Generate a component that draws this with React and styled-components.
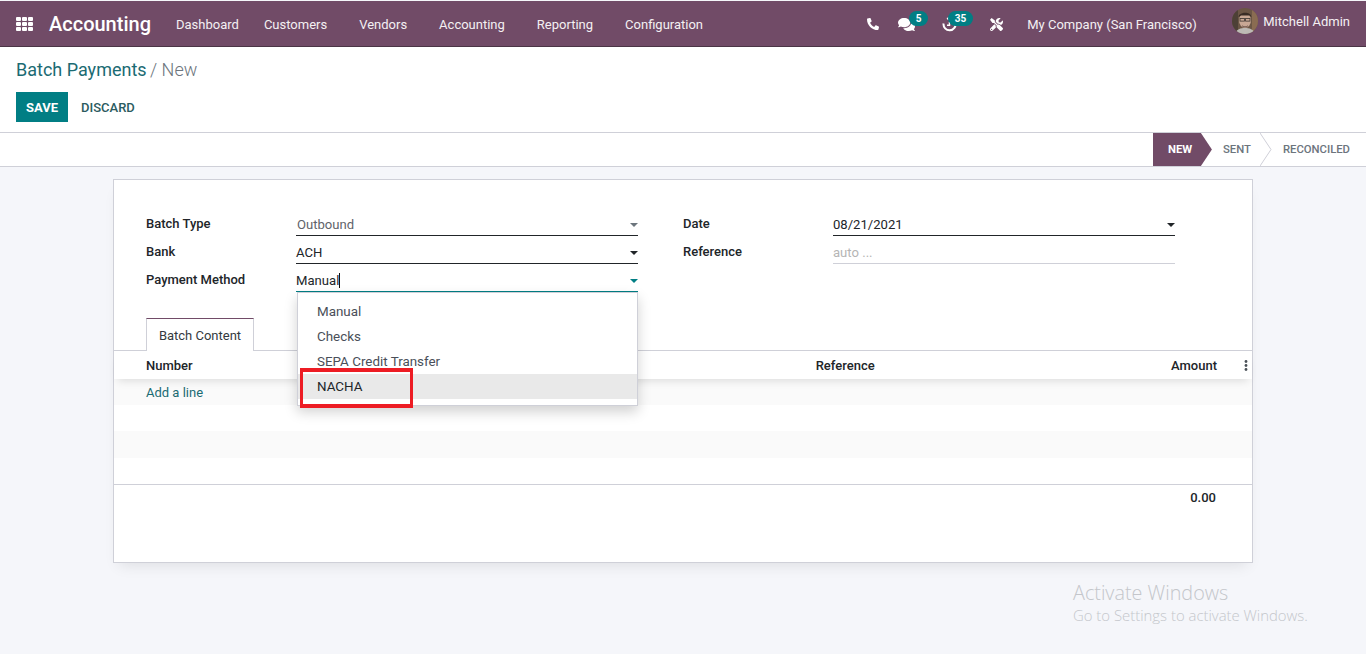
import React from "react";
import styled, { createGlobalStyle } from "styled-components";
import { FaPhone, FaComments, FaTools } from "react-icons/fa";

const Global = createGlobalStyle`
  * { box-sizing: border-box; }
  html, body { margin: 0; height: 100%; }
  body {
    background: #f5f6fa;
    font-family: Roboto, "Noto Sans", sans-serif;
    font-size: 13px;
    color: #212529;
  }
`;

const Page = styled.div`
  height: 654px;
  overflow: hidden;
  position: relative;
  display: flex;
  flex-direction: column;
`;

const Navbar = styled.header`
  height: 46px;
  flex: none;
  margin-top: 1px;
  background: #714b67;
  border-bottom: 1px solid #4b3546;
  display: flex;
  align-items: center;
  color: #fff;
  padding: 1px 16px 0;
`;

const Grid = styled.span`
  display: grid;
  grid-template-columns: repeat(3, 5px);
  grid-auto-rows: 4px;
  gap: 1px;
  width: 17px;
  span { background: #fff; border-radius: 1px; }
`;

const Brand = styled.span`
  font-size: 20px;
  font-weight: 500;
  margin-left: 16px;
  width: 127px;
`;

const MenuItem = styled.span`
  font-size: 13px;
  color: #f4f0f3;
  margin-right: ${(p) => p.$gap}px;
`;

const Right = styled.div`
  margin-left: auto;
  display: flex;
  align-items: center;
  height: 100%;
`;

const IconSlot = styled.span`
  position: relative;
  display: flex;
  align-items: center;
  height: 14px;
  width: ${(p) => p.$w}px;
  font-size: ${(p) => p.$size || 12}px;
`;

const Badge = styled.span`
  position: absolute;
  top: -6px;
  left: ${(p) => p.$left}px;
  height: 15px;
  padding: 0 6.5px;
  border-radius: 8px;
  background: #017e84;
  color: #fff;
  font-size: 10px;
  font-weight: 700;
  line-height: 15px;
`;

const Company = styled.span`
  font-size: 13px;
  color: #f4f0f3;
  width: 205px;
`;

const Avatar = styled.span`
  width: 26px;
  height: 26px;
  border-radius: 50%;
  overflow: hidden;
  margin-right: 5px;
  margin-top: -6px;
  svg { display: block; }
`;

const UserName = styled.span`
  font-size: 13px;
  color: #f4f0f3;
  margin-top: -6px;
`;

const ControlPanel = styled.section`
  height: 86px;
  flex: none;
  background: #fff;
  border-bottom: 1px solid #cfd0d8;
  padding: 11px 16px 0;
`;

const Breadcrumb = styled.div`
  font-size: 18px;
  line-height: 24px;
  color: #1b6b73;
  span { color: #6c757d; font-weight: 300; margin-left: -1px; }
`;

const Buttons = styled.div`
  display: flex;
  align-items: center;
  margin-top: 10px;
`;

const SaveButton = styled.span`
  width: 52px;
  height: 30px;
  background: #017e84;
  color: #fff;
  font-weight: 700;
  font-size: 13px;
  display: flex;
  align-items: center;
  justify-content: center;
`;

const DiscardButton = styled.span`
  margin-left: 13px;
  color: #2b5b60;
  font-weight: 500;
  font-size: 13px;
`;

const StatusBar = styled.div`
  height: 34px;
  flex: none;
  background: #fff;
  border-bottom: 1px solid #cfd0d8;
  display: flex;
  justify-content: flex-end;
`;

const StepActive = styled.span`
  width: 59px;
  background: #714b67;
  color: #fff;
  font-size: 11.3px;
  font-weight: 700;
  padding-left: 15px;
  line-height: 33px;
  clip-path: polygon(0 0, 48px 0, 100% 50%, 48px 100%, 0 100%);
`;

const Step = styled.span`
  font-size: 11.3px;
  font-weight: 500;
  color: #6c757d;
  line-height: 33px;
  padding-left: ${(p) => p.$pad}px;
  padding-right: ${(p) => p.$right}px;
  display: flex;
`;

const Chevron = styled.svg`
  width: 12px;
  height: 33px;
  flex: none;
`;

const Sheet = styled.main`
  position: relative;
  align-self: center;
  width: 1140px;
  height: 384px;
  margin-top: 12px;
  background: #fff;
  border: 1px solid #cfd0d8;
  box-shadow: 0 8px 14px -6px rgba(0, 0, 0, 0.1);
`;

const FormGrid = styled.div`
  display: grid;
  grid-template-columns: 492px 492px;
  column-gap: 45px;
  padding: 30px 32px 0;
  height: 138px;
`;

const FieldRow = styled.div`
  display: flex;
  height: 28px;
`;

const Label = styled.label`
  width: 150px;
  font-weight: 500;
  font-size: 13px;
  line-height: 28px;
  color: #212529;
`;

const Field = styled.div`
  position: relative;
  width: 342px;
  height: 26px;
  margin-bottom: 2px;
  border-bottom: 1px solid ${(p) => p.$line || "#212529"};
  font-size: 13.1px;
  line-height: 26px;
  color: ${(p) => p.$color || "#212529"};
  padding-top: 2px;
  padding-left: ${(p) => p.$pad || 0}px;
`;

const Caret = styled.i`
  position: absolute;
  right: 0;
  top: 13px;
  border-left: 4px solid transparent;
  border-right: 4px solid transparent;
  border-top: 4px solid ${(p) => p.$color || "#212529"};
`;

const Cursor = styled.b`
  display: inline-block;
  width: 1px;
  height: 15px;
  background: #111;
  vertical-align: -3px;
`;

const TabStrip = styled.div`
  height: 33px;
  padding-left: 32px;
  border-bottom: 1px solid #cfd0d8;
`;

const Tab = styled.span`
  display: inline-block;
  width: 108px;
  height: 33px;
  background: #fff;
  border: 1px solid #cfd0d8;
  border-top-color: #714b67;
  border-bottom: 0;
  text-align: center;
  line-height: 33px;
  font-size: 13px;
  color: #343a40;
`;

const TableHead = styled.div`
  height: 28px;
  display: flex;
  align-items: center;
  font-weight: 500;
  padding-left: 32px;
  box-shadow: 0 6px 8px -4px rgba(0, 0, 0, 0.12);
  position: relative;
`;

const RefHead = styled.span`
  margin-left: 623px;
`;

const AmountHead = styled.span`
  margin-left: auto;
  margin-right: 35px;
`;

const Dots = styled.svg`
  position: absolute;
  right: 4px;
  top: 9px;
  width: 4px;
  height: 11px;
`;

const Row = styled.div`
  height: ${(p) => p.$h}px;
  background: ${(p) => (p.$shade ? "#fafafa" : "#fff")};
  padding-left: 32px;
  line-height: 28px;
  color: #1b6b73;
  font-size: 13px;
`;

const TotalRow = styled.div`
  border-top: 1px solid #cfd0d8;
  margin-top: -1px;
  height: 40px;
  text-align: right;
  padding-right: 36px;
  padding-top: 5px;
  font-weight: 500;
  line-height: 16px;
`;

const Dropdown = styled.div`
  position: absolute;
  left: 183px;
  top: 112px;
  width: 341px;
  height: 114px;
  background: #fff;
  border: 1px solid #cfd0d8;
  box-shadow: 0 6px 12px rgba(0, 0, 0, 0.18);
  padding-top: 6px;
`;

const Option = styled.div`
  height: 25px;
  line-height: 25px;
  padding-left: 19px;
  font-size: 13.4px;
  color: ${(p) => (p.$active ? "#212529" : "#4a4f59")};
  background: ${(p) => (p.$active ? "#e9e9e9" : "transparent")};
`;

const Highlight = styled.div`
  position: absolute;
  left: 2px;
  top: 75px;
  width: 113px;
  height: 40px;
  border: solid #ed1c24;
  border-width: 4px 3px;
`;

const Watermark = styled.div`
  position: absolute;
  left: 1073px;
  top: 580px;
  color: #c4c6cb;
  font-family: "Open Sans", sans-serif;
  font-size: 14.9px;
  font-weight: 300;
  line-height: 20px;
`;

const WatermarkTitle = styled.div`
  font-size: 19.8px;
  line-height: 25px;
`;

function HistoryIcon() {
  return (
    <svg width="15" height="15" viewBox="0 0 15 15" fill="none">
      <path d="M5 1.9A6 6 0 1 1 1.6 6.5" stroke="#fff" strokeWidth="2" />
      <path d="M7.5 5v3.2H5" stroke="#fff" strokeWidth="1.5" />
    </svg>
  );
}

function Portrait() {
  return (
    <svg width="26" height="26" viewBox="0 0 26 26">
      <rect width="26" height="26" fill="#6b5645" />
      <rect width="6" height="26" fill="#4d4036" />
      <rect x="20" width="6" height="26" fill="#8a6c52" />
      <ellipse cx="13" cy="12.5" rx="6" ry="7.5" fill="#c8a895" />
      <path d="M6.5 9c0-5 12-6.5 13 0l-2-1.5H9z" fill="#382c25" />
      <rect x="8" y="10.5" width="4.4" height="2.6" fill="none" stroke="#3a3430" strokeWidth=".8" />
      <rect x="13.6" y="10.5" width="4.4" height="2.6" fill="none" stroke="#3a3430" strokeWidth=".8" />
      <path d="M10 17c1.5 1.6 4.5 1.6 6 0l-.5 2.5h-5z" fill="#80665a" />
      <path d="M3 26c1-5 6-6 10-6s9 1 10 6z" fill="#bdbab5" />
    </svg>
  );
}

const menu = [
  ["Dashboard", 25],
  ["Customers", 32],
  ["Vendors", 32],
  ["Accounting", 32],
  ["Reporting", 32],
  ["Configuration", 0],
];

export default function App() {
  return (
    <Page>
      <Global />
      <Navbar>
        <Grid>
          {Array.from({ length: 9 }).map((_, i) => (
            <span key={i} />
          ))}
        </Grid>
        <Brand>Accounting</Brand>
        {menu.map(([label, gap]) => (
          <MenuItem key={label} $gap={gap}>
            {label}
          </MenuItem>
        ))}
        <Right>
          <IconSlot $w={31} $size={12}>
            <FaPhone style={{ transform: "scaleX(-1)" }} />
          </IconSlot>
          <IconSlot $w={44} $size={17}>
            <FaComments />
            <Badge $left={11}>5</Badge>
          </IconSlot>
          <IconSlot $w={48}>
            <HistoryIcon />
            <Badge $left={6}>35</Badge>
          </IconSlot>
          <IconSlot $w={37} $size={13}>
            <FaTools />
          </IconSlot>
          <Company>My Company (San Francisco)</Company>
          <Avatar>
            <Portrait />
          </Avatar>
          <UserName>Mitchell Admin</UserName>
        </Right>
      </Navbar>

      <ControlPanel>
        <Breadcrumb>
          Batch Payments <span>/ New</span>
        </Breadcrumb>
        <Buttons>
          <SaveButton>SAVE</SaveButton>
          <DiscardButton>DISCARD</DiscardButton>
        </Buttons>
      </ControlPanel>

      <StatusBar>
        <StepActive>NEW</StepActive>
        <Step $pad={11} $right={9}>SENT</Step>
        <Chevron viewBox="0 0 12 33">
          <path d="M0 0l11 16.5L0 33" fill="none" stroke="#cfd0d8" />
        </Chevron>
        <Step $pad={11} $right={16}>RECONCILED</Step>
      </StatusBar>

      <Sheet>
        <FormGrid>
          <div>
            <FieldRow>
              <Label>Batch Type</Label>
              <Field $color="#5f636a" $pad={1}>
                Outbound
                <Caret $color="#6c757d" />
              </Field>
            </FieldRow>
            <FieldRow>
              <Label>Bank</Label>
              <Field>
                ACH
                <Caret />
              </Field>
            </FieldRow>
            <FieldRow>
              <Label>Payment Method</Label>
              <Field $line="#017e84">
                Manual
                <Cursor />
                <Caret $color="#017e84" />
              </Field>
            </FieldRow>
          </div>
          <div>
            <FieldRow>
              <Label>Date</Label>
              <Field>
                08/21/2021
                <Caret />
              </Field>
            </FieldRow>
            <FieldRow>
              <Label>Reference</Label>
              <Field $line="#cfd0d8" $color="#b5b5b5">
                auto ...
              </Field>
            </FieldRow>
          </div>
        </FormGrid>
        <TabStrip>
          <Tab>Batch Content</Tab>
        </TabStrip>
        <TableHead>
          Number
          <RefHead>Reference</RefHead>
          <AmountHead>Amount</AmountHead>
          <Dots viewBox="0 0 4 11">
            <circle cx="2" cy="1.5" r="1.4" fill="#495057" />
            <circle cx="2" cy="5.5" r="1.4" fill="#495057" />
            <circle cx="2" cy="9.5" r="1.4" fill="#495057" />
          </Dots>
        </TableHead>
        <Row $shade $h={26}>Add a line</Row>
        <Row $h={26} />
        <Row $shade $h={27} />
        <Row $h={27} />
        <TotalRow>0.00</TotalRow>

        <Dropdown>
          <Option>Manual</Option>
          <Option>Checks</Option>
          <Option>SEPA Credit Transfer</Option>
          <Option $active>NACHA</Option>
          <Highlight />
        </Dropdown>
      </Sheet>

      <Watermark>
        <WatermarkTitle>Activate Windows</WatermarkTitle>
        Go to Settings to activate Windows.
      </Watermark>
    </Page>
  );
}
